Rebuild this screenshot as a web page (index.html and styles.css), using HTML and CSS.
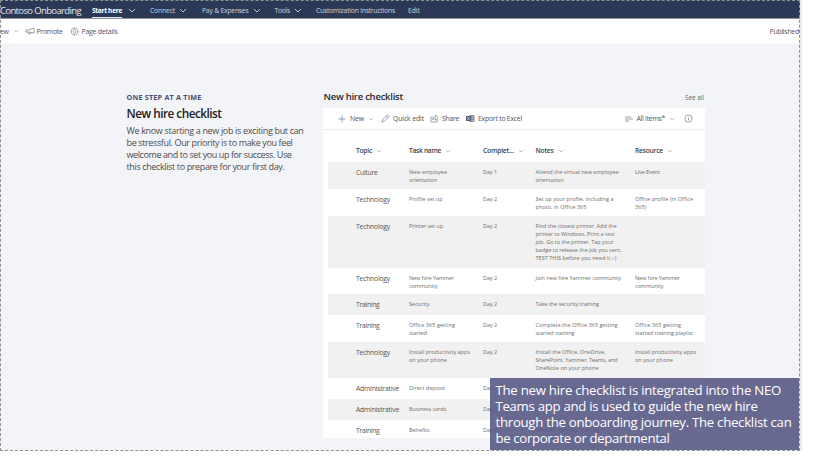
FILE: index.html
```html
<!DOCTYPE html>
<html lang="en">
<head>
<meta charset="utf-8">
<title>Contoso Onboarding</title>
<link rel="stylesheet" href="styles.css">
</head>
<body>
<svg class="defs" width="0" height="0"><symbol id="chev" viewBox="0 0 8 5"><path d="M1 1l3 3 3-3" fill="none" stroke="currentColor"/></symbol></svg>
<div class="page">
  <nav class="nav">
    <span class="brand"><span class="t" data-w="81">Contoso Onboarding</span></span>
    <span class="item active"><span class="t" data-w="30">Start here</span></span><svg class="chev c1"><use href="#chev"/></svg>
    <span class="item"><span class="t" data-w="25">Connect</span></span><svg class="chev c2"><use href="#chev"/></svg>
    <span class="item"><span class="t" data-w="46.5">Pay &amp; Expenses</span></span><svg class="chev c3"><use href="#chev"/></svg>
    <span class="item"><span class="t" data-w="15.5">Tools</span></span><svg class="chev c4"><use href="#chev"/></svg>
    <span class="item"><span class="t" data-w="79">Customization instructions</span></span>
    <span class="item edit"><span class="t" data-w="12">Edit</span></span>
  </nav>
  <div class="commands">
    <span class="new"><span class="t" data-w="8.5">ew</span></span>
    <svg class="chev small"><use href="#chev"/></svg>
    <svg class="ico mega" viewBox="0 0 10 8"><path d="M9 1v5L3.500 5H1V3h2.500zM3 5l1 2h1.500V5.500"/></svg>
    <span class="promote"><span class="t" data-w="26">Promote</span></span>
    <svg class="ico gear" viewBox="0 0 10 10"><circle cx="5" cy="5" r="3.700"/><circle cx="5" cy="5" r="1.500"/><path d="M5 .3v1M5 8.700v1M.3 5h1M8.700 5h1"/></svg>
    <span><span class="t" data-w="36">Page details</span></span>
    <span class="published"><span class="t" data-w="29.5">Published</span></span>
  </div>
  <main class="main">
    <section class="intro">
      <div class="eyebrow"><span class="t" data-w="75">ONE STEP AT A TIME</span></div>
      <h1><span class="t" data-w="95">New hire checklist</span></h1>
      <p><span class="t" data-w="177">We know starting a new job is exciting but can</span><br><span class="t" data-w="166">be stressful. Our priority is to make you feel</span><br><span class="t" data-w="165">welcome and to set you up for success. Use</span><br><span class="t" data-w="158">this checklist to prepare for your first day.</span></p>
    </section>
    <section class="list">
      <header class="listhead"><h2><span class="t" data-w="79.5">New hire checklist</span></h2><span class="seeall"><span class="t" data-w="19">See all</span></span></header>
      <div class="card">
        <div class="toolbar">
          <svg class="ico plus" viewBox="0 0 8 8"><path d="M4 .5v7M.5 4h7"/></svg>
          <span class="tnew"><span class="t" data-w="14">New</span></span><svg class="chev small"><use href="#chev"/></svg>
          <svg class="ico pencil" viewBox="0 0 9 9"><path d="M1 8l.7-2.500L6.500.9l1.600 1.600-4.800 4.800zM5.500 2l1.500 1.500"/></svg>
          <span class="quick"><span class="t" data-w="31">Quick edit</span></span>
          <svg class="ico share" viewBox="0 0 9 9"><path d="M3 3H1v5h6V5.500M2.800 6C3 3.500 4 2.800 5.500 2.800V1l2.700 2.600L5.500 6V4.500C4.500 4.500 3.500 5 2.800 6z"/></svg>
          <span class="sharetext"><span class="t" data-w="17">Share</span></span>
          <svg class="excel" viewBox="0 0 9 9"><path d="M3 1h5.500v7H3z" fill="#c3c9d2"/><path d="M3.500 1.500H8v6H3.500M5.800 1.500v6M3.500 3.500H8M3.500 5.500H8" stroke="#657087" stroke-width=".6" fill="none"/><path d="M0 2h5v5H0z" fill="#56637b"/><path d="M1.500 3.200l2 2.600M3.500 3.200l-2 2.600" stroke="#dfe3ea" stroke-width=".7"/></svg>
          <span class="export"><span class="t" data-w="44">Export to Excel</span></span>
          <svg class="ico lines" viewBox="0 0 8 6"><path d="M0 1h6M0 3h8M0 5h4"/></svg>
          <span class="all"><span class="t" data-w="28.500">All Items*</span></span><svg class="chev small"><use href="#chev"/></svg>
          <svg class="ico info" viewBox="0 0 9 9"><circle cx="4.500" cy="4.500" r="3.600"/><path d="M4.500 4v2.500M4.500 2.400v.8"/></svg>
        </div>
        <div class="rows" id="rows"></div>
      </div>
    </section>
  </main>
  <aside class="caption"><span class="t" data-w="285.500">The new hire checklist is integrated into the NEO</span><br><span class="t" data-w="262">Teams app and is used to guide the new hire</span><br><span class="t" data-w="296">through the onboarding journey. The checklist can</span><br><span class="t" data-w="174">be corporate or departmental</span></aside>
</div>
<script src="app.js"></script>
</body>
</html>
```
FILE: styles.css
```css
* { box-sizing: border-box; }
body { margin: 0; background: #fff; font-family: "Open Sans", "Noto Sans", sans-serif; color: #333; overflow: hidden; }
.defs { display: block; height: 0; }
.page { position: relative; width: 802px; height: 451px; background: #f3f4f8; border-right: 2px solid #eeeae8; overflow: hidden; }
.page::after { content: ""; position: absolute; inset: 0; border: 1px dashed #8d918f; pointer-events: none; }
.t { display: inline-block; white-space: nowrap; }
.nav { height: 19px; background: #2c3956; border-bottom: 1px solid #929597; display: flex; align-items: center; color: #ced4df; font-size: 6.700px; line-height: 13px; padding-top: 2px; }
.brand { width: 92px; font-size: 9.500px; color: #e2e6ee; }
.active { font-weight: 700; color: #fff; border-bottom: 1px solid #e4e7ee; height: 15px; line-height: 15px; }
.chev { width: 8px; height: 5px; flex: none; color: #c0c7d3; }
.chev.small { width: 6px; height: 4px; color: #a4a4a4; }
.c1 { margin: 0 14px 0 6px; }
.c2 { margin: 0 15px 0 4px; }
.c3 { margin: 0 14px 0 4px; }
.c4 { margin: 0 14px 0 4px; }
.edit { margin-left: 13px; }
.commands { height: 25px; background: #fff; border-bottom: 1px solid #f8f8fa; display: flex; align-items: center; font-size: 7px; color: #555; }
.ico { flex: none; fill: none; stroke: #858c96; stroke-width: .8; }
.new { margin-right: 4px; }
.mega { width: 10px; height: 8px; margin: 0 2px 0 6px; }
.gear { width: 9px; height: 9px; margin: 0 3px 0 7px; }
.published { margin-left: auto; margin-right: 1px; }
.main { display: flex; height: 407px; }
.intro { width: 323px; padding: 47px 0 0 126.500px; }
.eyebrow { font-size: 7.200px; line-height: 12px; font-weight: 700; color: #484f70; }
h1 { margin: 3px 0 4px; font-size: 11.800px; line-height: 15px; font-weight: 600; color: #222; }
.intro p { margin: 0; font-size: 9px; line-height: 12px; color: #4c4c4f; }
.list { width: 382px; }
.listhead { height: 64px; padding-top: 46px; display: flex; justify-content: space-between; align-items: flex-start; }
h2 { margin: 0 0 0 .5px; font-size: 9.500px; line-height: 14px; font-weight: 600; color: #27292d; }
.seeall { font-size: 6.500px; line-height: 16px; color: #666; margin-right: 1px; }
.card { background: #fff; height: 330px; }
.toolbar { height: 22px; border-bottom: 1px solid #eee; display: flex; align-items: center; padding-left: 15px; font-size: 6.900px; color: #555; }
.plus { width: 8px; height: 8px; margin-right: 4px; }
.tnew { margin-right: 4px; }
.pencil { width: 9px; height: 9px; margin: 0 3px 0 7px; }
.share { width: 9px; height: 9px; margin: 0 3px 0 6px; }
.excel { width: 9px; height: 9px; margin: 0 3px 0 7px; }
.lines { width: 8px; height: 6px; margin-left: auto; margin-right: 4px; }
.all { margin-right: 4px; }
.info { width: 9px; height: 9px; margin: 0 12px 0 9px; }
.rows { padding-left: 5px; }
.row { display: grid; grid-template-columns: 53px 74px 52.500px 99.500px 69px; padding: 6px 0 0 28px; font-size: 5.600px; line-height: 8px; color: #707070; }
.row.shade { background: #f1f1f1; }
.topic { font-size: 6.800px; line-height: 9px; color: #555; }
.row.head { font-size: 6.700px; line-height: 10px; font-weight: 600; color: #444; padding: 12px 0 0 28px; }
.row.head > div { display: flex; align-items: center; gap: 4px; height: 18px; }
.h27 { height: 27px; } .h26 { height: 26px; } .h52 { height: 52px; } .h22 { height: 21px; }
.h36 { height: 36px; } .h21 { height: 21px; } .h19 { height: 19px; } .h32 { height: 32px; }
.caption { position: absolute; left: 490px; top: 378px; width: 309px; height: 72px; padding: 4px 0 0 5.500px; background: rgba(89, 90, 133, .9); color: #fff; font-size: 13.200px; line-height: 16px; }
```
FILE: app.js
```js
// Each cell is a list of lines; a line is [text, width].
const rows = [
  ['h27', 1, ['Culture', 21.5], [['New employee', 38], ['orientation', 28]], 'Day 1', [['Attend the virtual new employee', 83], ['orientation', 28]], [['Live Event', 25]]],
  ['h27', 0, ['Technology', 34], [['Profile set up', 33.5]], 'Day 2', [['Set up your profile, including a', 78], ['photo, in Office 365', 51]], [['Office profile (in Office', 58], ['365)', 11.5]]],
  ['h52', 1, ['Technology', 34], [['Printer set up', 34]], 'Day 2', [['Find the closest printer. Add the', 81], ['printer to Windows. Print a test', 79], ['job. Go to the printer. Tap your', 78], ['badge to release the job you sent.', 86], ['TEST THIS before you need it :-)', 81]], []],
  ['h26', 0, ['Technology', 34], [['New hire Yammer', 45], ['community', 28.5]], 'Day 2', [['Join new hire Yammer community', 85.5]], [['New hire Yammer', 45], ['community', 28.5]]],
  ['h22', 1, ['Training', 23.5], [['Security', 20.5]], 'Day 2', [['Take the security training', 63.5]], []],
  ['h27', 0, ['Training', 23.5], [['Office 365 getting', 46], ['started', 18]], 'Day 2', [['Complete the Office 365 getting', 82], ['started training', 39]], [['Office 365 getting', 46], ['started training playlist', 58]]],
  ['h36', 1, ['Technology', 34], [['Install productivity apps', 61], ['on your phone', 38]], 'Day 2', [['Install the Office, OneDrive,', 70], ['SharePoint, Yammer, Teams, and', 82], ['OneNote on your phone', 63]], [['Install productivity apps', 61], ['on your phone', 38]]],
  ['h21', 0, ['Administrative', 43], [['Direct deposit', 36]], 'Day 2', [['Set up direct deposit', 54]], []],
  ['h21', 1, ['Administrative', 43], [['Business cards', 37]], 'Day 2', [['Order your business cards', 66]], []],
  ['h19', 0, ['Training', 23.5], [['Benefits', 20.5]], 'Day 3', [['Take the benefits training', 64]], []]
];
const line = ([text, w]) => `<span class="t" data-w="${w}">${text}</span>`;
const cell = lines => `<div>${lines.map(line).join('<br>')}</div>`;
const heads = [['Topic', 16], ['Task name', 32], ['Complet...', 31], ['Notes', 18], ['Resource', 28]];
document.getElementById('rows').innerHTML =
  `<div class="row head h32">${heads.map(h => `<div>${line(h)}<svg class="chev small"><use href="#chev"/></svg></div>`).join('')}</div>` +
  rows.map(([h, shade, topic, task, day, notes, res]) =>
    `<div class="row ${h}${shade ? ' shade' : ''}"><div class="topic">${line(topic)}</div>${cell(task)}${cell([[day, 14]])}${cell(notes)}${cell(res)}</div>`).join('');
// Track each line's letters to its set width.
document.querySelectorAll('.t').forEach(el => {
  const spread = (el.dataset.w - el.getBoundingClientRect().width) / el.textContent.length;
  el.style.letterSpacing = `${spread}px`;
});
```
